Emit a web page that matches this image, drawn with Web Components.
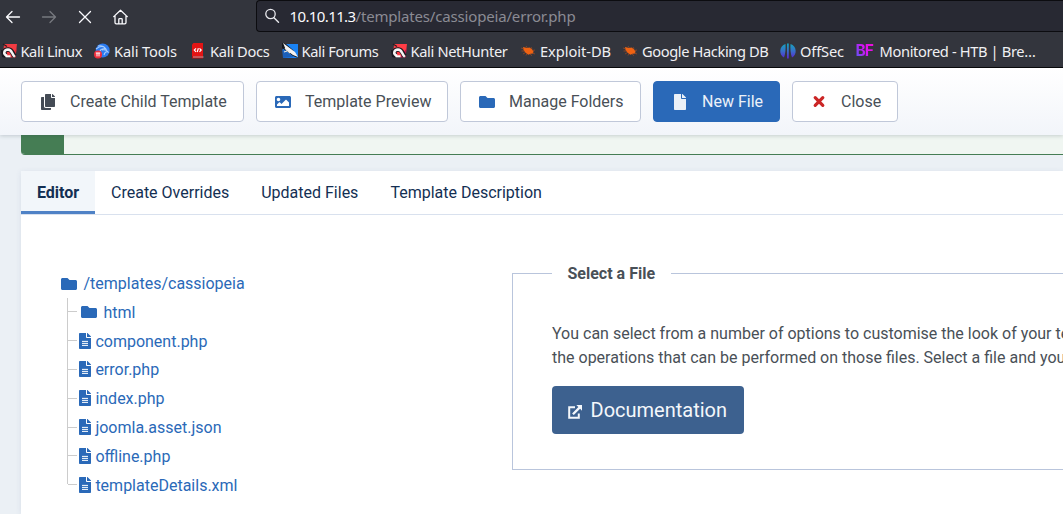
<!DOCTYPE html>
<html lang="en">
<head>
<meta charset="utf-8">
<title>Templates: Customise</title>
<style>
html,body{margin:0;height:100%;overflow:hidden;background:#ebf0f5}
</style>
</head>
<body>
<joomla-screen></joomla-screen>
<script>
const svg=(w,h,vb,body)=>`<svg width="${w}" height="${h}" viewBox="${vb}" style="display:block;overflow:visible">${body}</svg>`;
const FOLDER='<path fill="currentColor" d="M464 128H272l-64-64H48C21.5 64 0 85.500 0 112v288c0 26.500 21.500 48 48 48h416c26.500 0 48-21.500 48-48V176c0-26.500-21.500-48-48-48z"/>';
const FILE='<path fill="currentColor" d="M224 136V0H24C10.700 0 0 10.700 0 24v464c0 13.300 10.700 24 24 24h336c13.300 0 24-10.700 24-24V160H248c-13.200 0-24-10.800-24-24zm160-14.100v6.100H256V0h6.100c6.400 0 12.500 2.500 17 7l97.900 98c4.500 4.500 7 10.600 7 16.900z"/>';
const magnet=(a,b)=>svg(16,16,'0 0 16 16',`<path d="M3 1h13l-1.500 13H2z" fill="${a}"/><path d="M9 14.500h5.500l1-9z" fill="${b}"/><path d="M0 7l4 1 1 7-4-1z" fill="#17191e"/><path d="M5 12.500C1.500 10 3.500 6.300 7.500 6.500c4 .3 3.500 4 6.500 7" fill="none" stroke="#1c1a20" stroke-width="4.600"/><path d="M6 12.800C1.500 11 3 6.600 7 6.500c4.200 0 3.500 4.300 6.800 7.300" fill="none" stroke="#f4f4f4" stroke-width="2.500"/><path d="M4.500 13.300h5" stroke="#fff" stroke-width="2"/><path d="M2 1l4 2.500" stroke="#222" stroke-width="1.300"/>`);
const bug=svg(16,16,'0 0 16 16','<path d="M3 4l4 1 2.500-.5 2.500 1.700 1.500 2-.5 2.300-2.500.3L8.500 11.800 5.500 9.700 3.500 7z" fill="#ef6212"/><path d="M1.500 8h3M1 5l3 1M6 3l1.500 2M11 4l1 2M12.500 7.500l2.500-.5M12.500 10l2.500 1M3 11l2.500-1.500M6 12.500l1-1.500M10 11l2 1.700" stroke="#a34c21" stroke-width=".7"/>');
const ICONS={
 back:svg(16,16,'0 0 16 16','<path d="M14.500 8H2M7 2.500L1.500 8 7 13.500" fill="none" stroke="#fbfbfe" stroke-width="1.300" stroke-linecap="round" stroke-linejoin="round"/>'),
 forward:svg(16,16,'0 0 16 16','<path d="M1.500 8H14M9 2.500L14.500 8 9 13.500" fill="none" stroke="#77797f" stroke-width="1.300" stroke-linecap="round" stroke-linejoin="round"/>'),
 stop:svg(16,16,'0 0 16 16','<path d="M2.500 2.500l11 11M13.500 2.500l-11 11" fill="none" stroke="#fbfbfe" stroke-width="1.300" stroke-linecap="round"/>'),
 home:svg(16,16,'0 0 16 16','<path d="M.7 7.600L7.500 1.200l6.800 6.400M2 6.500v7q0 1.300 1.300 1.300h8.400q1.300 0 1.300-1.300v-7M5.800 14.500v-4q0-.8.800-.8h1.800q.8 0 .8.800v4" fill="none" stroke="#fbfbfe" stroke-width="1.300" stroke-linecap="round" stroke-linejoin="round"/>'),
 search:svg(16,16,'0 0 16 16','<circle cx="5.500" cy="6" r="4.700" fill="none" stroke="#e9e9ee" stroke-width="1.300"/><path d="M9 9.700l4.500 4.500" stroke="#e9e9ee" stroke-width="1.400" stroke-linecap="round"/>'),
 kali:magnet('#f33b42','#d62c39'), hunter:magnet('#ff3c45','#b5164d'),
 tools:svg(16,16,'0 0 16 16','<circle cx="8.700" cy="7.500" r="7" fill="#2b7bf0"/><path d="M2 6q5-4 9-1.500M4 3q5-1 8 3-5-1-6 2M8 7q4-1 6 2-3-1-4 3" fill="none" stroke="#a9cdfb" stroke-width="1.100"/><circle cx="4" cy="11.500" r="4" fill="#ee2d3b"/><path d="M1.800 10h4.400M3 10v3.400M5 10v3.400" stroke="#fff"/>'),
 docs:svg(16,16,'0 0 16 16','<path d="M3.500 0H13v13H2V1.500z" fill="#e31414"/><path d="M2 13h11v2.500H2z" fill="#bd0f12"/><path d="M3 14h10.500" stroke="#ddd" stroke-width=".7"/><path d="M6 5.300L4.300 7 6 8.800M9.500 5.300L11.200 7 9.500 8.800M8.400 5.200L7.200 9" fill="none" stroke="#fff" stroke-width="1.200"/>'),
 forums:svg(16,16,'0 0 16 16','<path d="M1 1h15v14H1z" fill="#1a83f4"/><path d="M0 0l4 1 7 6 5 8-5-2L0 5z" fill="#15171c"/><path d="M1 0l12 9 3 5-5-2L4 7z" fill="#f3f3f3"/><path d="M0 6l6 4 6 4-11 1z" fill="#1c5fb8"/><path d="M3 5l5 5M5 8l-3 1" stroke="#e7e7e7" stroke-width="1.300"/>'),
 bug,
 offsec:svg(16,16,'0 0 16 16','<defs><linearGradient id="g" x2="0" y2="1"><stop stop-color="#13a5bd"/><stop offset=".5" stop-color="#3770c9"/><stop offset="1" stop-color="#5b23d2"/></linearGradient></defs><path d="M5.500 1C-.8 2.500-1.500 12 4 14.500 5.500 11 5.800 5 5.500 1zM7 .5h1.800v15H7zM10.500 1c6.300 1.500 7 11 1.500 13.500C10.500 11 10.200 5 10.500 1z" fill="url(#g)"/>'),
 bf:'<b style="display:block;width:20px;white-space:nowrap;font:700 15.500px/16px Inter,sans-serif;letter-spacing:-1px;background:linear-gradient(60deg,#5b57f5 5%,#d912f3 50%,#f50cd0);-webkit-background-clip:text;background-clip:text;color:transparent">BF</b>',
 copy:svg(14,16,'0 0 448 512','<path fill="currentColor" d="M320 448v40c0 13.300-10.700 24-24 24H24c-13.300 0-24-10.700-24-24V120c0-13.300 10.700-24 24-24h72v296c0 30.900 25.100 56 56 56h168zm0-344V0H152c-13.300 0-24 10.700-24 24v368c0 13.300 10.700 24 24 24h272c13.300 0 24-10.700 24-24V128H344c-13.200 0-24-10.800-24-24zm121-31L375 7a24 24 0 0 0-17-7H352v96h96v-6a24 24 0 0 0-7-17z"/>'),
 image:svg(16,16,'0 0 512 512','<path fill="currentColor" d="M464 448H48c-26.500 0-48-21.500-48-48V112c0-26.500 21.500-48 48-48h416c26.500 0 48 21.500 48 48v288c0 26.500-21.500 48-48 48zM112 120c-30.900 0-56 25.100-56 56s25.100 56 56 56 56-25.100 56-56-25.100-56-56-56zM64 384h384V272l-87.500-87.500c-4.700-4.700-12.300-4.700-17 0L208 320l-55.500-55.500c-4.700-4.700-12.300-4.700-17 0L64 336v48z"/>'),
 folder:svg(16,16,'0 0 512 512',FOLDER),
 file:svg(12,16,'0 0 384 512',FILE),
 filealt:svg(12,16,'0 0 384 512',FILE+'<path d="M96 268h192M96 332h192M96 396h192" stroke="#fff" stroke-width="32"/>'),
 times:svg(11,11,'0 0 11 11','<path d="M1.200 1.700l7.600 7.600M8.800 1.700L1.200 9.300" stroke="currentColor" stroke-width="3.200" stroke-linecap="round"/>'),
 external:svg(16,16,'0 0 16 16','<path d="M8 3.200H2.200v10.600h9.600V9.500" fill="none" stroke="currentColor" stroke-width="2"/><path d="M9.300 1H15v5.700l-1.900-1.900-6.300 6.300-1.700-1.700 6.300-6.300z" fill="currentColor"/>')
};
function define(name,css,html,ready){
 customElements.define(name,class extends HTMLElement{
  connectedCallback(){
   if(this.shadowRoot)return;
   const t=document.createElement('template');
   t.innerHTML=`<style>*{box-sizing:border-box}${css}</style>`+(typeof html==='function'?html(this):html);
   this.attachShadow({mode:'open'}).append(t.content.cloneNode(true));
   if(ready)ready(this);
  }
 });
}
define('ui-icon',':host{display:block;flex:none}',el=>ICONS[el.getAttribute('name')]);
/* A label whose tracking adapts so that it fills the width it is given. */
define('fit-label',':host{display:block;flex:none;white-space:nowrap}span{display:inline-block}','<span><slot></slot></span>',el=>{
 const w=+el.getAttribute('width'),s=el.shadowRoot.querySelector('span');
 el.style.width=w+'px';
 s.style.letterSpacing=(w-s.getBoundingClientRect().width)/el.textContent.length+'px';
});
define('nav-bar',`:host{display:flex;height:32px;background:#33353d;align-items:center}
 .i{display:flex;width:256px;gap:20px;padding:1px 0 0 5px}
 .url{flex:1;height:32px;border:1px solid #0c0c10;border-right:0;border-radius:4px 0 0 4px;background:#282933;display:flex;align-items:center;padding:0 0 0 8px;gap:8.500px;font:15px "Noto Sans",sans-serif;color:#fbfbfe}
 i{font-style:normal;color:#8b8b93}`,
 `<div class="i"><ui-icon name="back"></ui-icon><ui-icon name="forward"></ui-icon><ui-icon name="stop"></ui-icon><ui-icon name="home"></ui-icon></div>
 <div class="url"><ui-icon name="search"></ui-icon><div style="display:flex"><fit-label width="66">10.10.11.3</fit-label><i><fit-label width="220">/templates/cassiopeia/error.php</fit-label></i></div></div>`);
define('book-mark',`:host{display:flex;flex:none;align-items:center}ui-icon{width:var(--iw,20px)}`,
 el=>`<ui-icon name="${el.getAttribute('icon')}"></ui-icon><fit-label width="${el.getAttribute('width')}">${el.textContent}</fit-label>`);
define('bookmark-bar',`:host{display:flex;box-sizing:border-box;height:36px;background:#33353d;border-bottom:1px solid #08080a;align-items:center;padding:3px 0 0 1px;font:14.670px "Noto Sans",sans-serif;color:#f0f0f3}`,
 `<book-mark icon="kali" width="61.500" style="--iw:19.500px;margin-right:12px">Kali Linux</book-mark>
 <book-mark icon="tools" width="63" style="margin-right:13px">Kali Tools</book-mark>
 <book-mark icon="docs" width="59.500" style="margin-right:12px">Kali Docs</book-mark>
 <book-mark icon="forums" width="77" style="margin-right:12px">Kali Forums</book-mark>
 <book-mark icon="hunter" width="97" style="margin-right:12.500px">Kali NetHunter</book-mark>
 <book-mark icon="bug" width="71" style="margin-right:11px">Exploit-DB</book-mark>
 <book-mark icon="bug" width="126.500" style="margin-right:11.500px">Google Hacking DB</book-mark>
 <book-mark icon="offsec" width="44" style="margin-right:11.500px">OffSec</book-mark>
 <book-mark icon="bf" width="156" style="--iw:24px">Monitored - HTB | Bre…</book-mark>`);
define('tool-button',`:host{display:flex;box-sizing:border-box;flex:none;align-items:center;height:41px;border:1px solid #c0c8d9;border-radius:4px;background:#fff;color:#495057}
 div{width:20px;margin:0 12px 0 16px;display:flex;justify-content:center;color:var(--ic,#2a69b8)}
 :host([primary]){background:#2a69b8;border-color:#2a69b8;color:#ebf1f8}`,
 el=>`<div><ui-icon name="${el.getAttribute('icon')}"></ui-icon></div><slot></slot>`);
define('tool-bar',`:host{display:flex;box-sizing:border-box;height:67px;position:relative;gap:12px;padding:13px 0 0 21px;background:linear-gradient(#fff,#f2f5fa);box-shadow:0 1px 4px rgba(30,50,60,.2)}`,
 `<tool-button icon="copy" style="width:223px;--ic:#444b55">Create Child Template</tool-button>
 <tool-button icon="image" style="width:192px">Template Preview</tool-button>
 <tool-button icon="folder" style="width:181px">Manage Folders</tool-button>
 <tool-button icon="file" primary style="width:127px;--ic:#ebf1f8">New File</tool-button>
 <tool-button icon="times" style="width:106px;--ic:#cb2626">Close</tool-button>`);
define('alert-strip',`:host{display:flex;box-sizing:border-box;height:20px;margin-left:21px;border-bottom:1px solid #457d54;background:#f0f6f2;border-bottom-left-radius:4px;overflow:hidden}div{width:43px;background:#457d54}`,'<div></div>');
define('tab-item',`:host{display:block;box-sizing:border-box;height:43px;padding:0 16px;line-height:43px;color:#132f53}
 :host([active]){background:#f2f6fa;font-weight:700;box-shadow:inset 0 -3px #4f82c6;width:74px}`,'<slot></slot>');
define('tab-list',`:host{display:flex;box-sizing:border-box;height:44px;border-bottom:1px solid #d9e1ee}`,
 `<tab-item active>Editor</tab-item><tab-item>Create Overrides</tab-item><tab-item>Updated Files</tab-item><tab-item>Template Description</tab-item>`);
define('tree-row',`:host{display:grid;grid-template-columns:10px auto 1fr;height:28.800px;align-items:center;color:#2a69b8}
 .t{height:100%;border-left:1px solid #ccc;width:10px;display:flex}
 .t:before{content:"";width:10px;height:13px;border-bottom:1px solid #ccc}
 :host([last]) .t{height:13px;align-self:start}
 ui-icon{margin:-2px 4.600px 0 1.900px}
 :host([folder]) ui-icon{margin:-1px 6.600px 0 3.900px}`,
 el=>`<div class="t"></div><ui-icon name="${el.hasAttribute('folder')?'folder':'filealt'}"></ui-icon><span><slot></slot></span>`);
define('file-tree',`:host{display:block;box-sizing:border-box;flex:none;width:491px;padding:55px 0 0 40px;color:#2a69b8}
 .r{display:flex;align-items:center;gap:6.500px;height:28.400px}
 .r ui-icon{margin-top:-1px}
 .c{margin-left:5.900px}`,
 `<div class="r"><ui-icon name="folder"></ui-icon><span>/templates/cassiopeia</span></div>
 <div class="c"><tree-row folder>html</tree-row><tree-row>component.php</tree-row><tree-row>error.php</tree-row><tree-row>index.php</tree-row><tree-row>joomla.asset.json</tree-row><tree-row>offline.php</tree-row><tree-row last>templateDetails.xml</tree-row></div>`);
define('select-panel',`:host{display:block;flex:none;width:700px;padding-top:46px}
 fieldset{margin:0;border:1px solid #b9c5dc;padding:0 39px;height:209px;min-width:0}
 legend{padding:0 16px 0 15.500px;height:24px;line-height:26px;font-weight:700;color:#495057;width:119px;white-space:nowrap}
 p{margin:37px 0 16px;line-height:24px;color:#495057;white-space:nowrap}
 a{display:flex;width:192px;height:48px;border-radius:4px;background:#3d618f;color:#f4f7fb;font-size:20px;align-items:center;padding-left:15px;gap:7.500px}
 ui-icon{margin-top:3px}`,
 `<fieldset><legend>Select a File</legend><p>You can select from a number of options to customise the look of your te<br>the operations that can be performed on those files. Select a file and you</p><a><ui-icon name="external"></ui-icon>Documentation</a></fieldset>`);
define('joomla-screen',`:host{display:block;width:1063px;height:514px;overflow:hidden;font:16px/24px Roboto,sans-serif;background:#ebf0f5}
 main{margin:16px 0 0 21px;height:343px;background:#fff;box-shadow:0 1px 6px rgba(40,70,120,.09)}
 .cols{display:flex;width:1042px;height:299px;overflow:hidden}`,
 `<nav-bar></nav-bar><bookmark-bar></bookmark-bar><tool-bar></tool-bar><alert-strip></alert-strip>
 <main><tab-list></tab-list><div class="cols"><file-tree></file-tree><select-panel></select-panel></div></main>`);
</script>
</body>
</html>
